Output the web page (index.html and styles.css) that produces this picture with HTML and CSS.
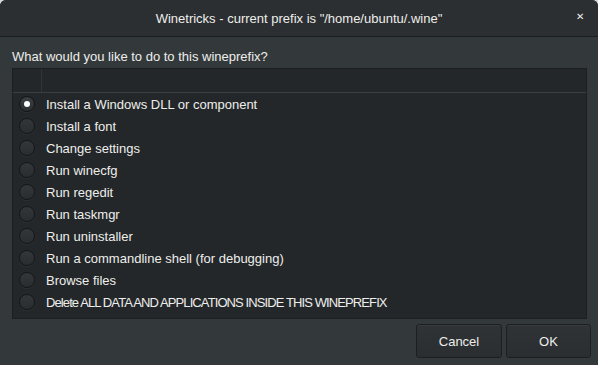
FILE: index.html
```html
<!DOCTYPE html>
<html lang="en">
<head>
    <meta charset="UTF-8">
    <title>Winetricks</title>
    <link rel="stylesheet" href="styles.css">
</head>
<body>

    <div class="window">
        <div class="titlebar">
            <span class="title">Winetricks - current prefix is "/home/ubuntu/.wine"</span>
            <span class="close">&#x2715;</span>
        </div>

        <div class="content">
            <div class="question">What would you like to do to this wineprefix?</div>

            <div class="list">
                <div class="list-header">
                    <div class="header-cell first"></div>
                    <div class="header-cell"></div>
                </div>
                <div class="row"><span class="radio checked"></span>Install a Windows DLL or component</div>
                <div class="row"><span class="radio"></span>Install a font</div>
                <div class="row"><span class="radio"></span>Change settings</div>
                <div class="row"><span class="radio"></span>Run winecfg</div>
                <div class="row"><span class="radio"></span>Run regedit</div>
                <div class="row"><span class="radio"></span>Run taskmgr</div>
                <div class="row"><span class="radio"></span>Run uninstaller</div>
                <div class="row"><span class="radio"></span>Run a commandline shell (for debugging)</div>
                <div class="row"><span class="radio"></span>Browse files</div>
                <div class="row"><span class="radio"></span><span class="caps">Delete ALL DATA AND APPLICATIONS INSIDE THIS WINEPREFIX</span></div>
            </div>

            <div class="buttons">
                <button type="button" class="btn cancel">Cancel</button>
                <button type="button" class="btn ok">OK</button>
            </div>
        </div>
    </div>

</body>
</html>
```

FILE: styles.css
```css
html {
    background-color: #d9d9d9;
}

body {
    margin: 0;
    padding: 0;
    font-family: 'Liberation Sans', Arial, sans-serif;
    font-size: 13px;
    color: #eeeeec;
}

.window {
    width: 598px;
    height: 365px;
    background-color: #33393b;
    border-radius: 6px 6px 0 0;
    overflow: hidden;
    display: flex;
    flex-direction: column;
}

.titlebar {
    height: 36px;
    flex-shrink: 0;
    background-color: #2c2f31;
    border-bottom: 1px solid #1b1d1e;
    display: flex;
    align-items: center;
    justify-content: center;
    position: relative;
}

.title {
    color: #eeeeec;
}

.close {
    position: absolute;
    right: 14px;
    top: 11px;
    font-size: 10px;
    color: #eeeeec;
}

.content {
    display: flex;
    flex-direction: column;
    padding: 0 11px 0 12px;
}

.question {
    height: 31px;
    line-height: 40px;
}

.list {
    background-color: #232729;
    border: 1px solid #1c1f21;
    height: 251px;
    box-sizing: border-box;
}

.list-header {
    display: flex;
    height: 23px;
    border-bottom: 1px solid #3a3f42;
}

.header-cell {
    flex: 1;
}

.header-cell.first {
    flex: 0 0 28px;
    border-right: 1px solid #2f3436;
}

.row {
    height: 22px;
    display: flex;
    align-items: center;
    padding-left: 6px;
}

/* caps in the original font are narrower */
.caps {
    letter-spacing: -0.9px;
}

.radio {
    width: 16px;
    height: 16px;
    box-sizing: border-box;
    border-radius: 50%;
    border: 1px solid #151718;
    background: linear-gradient(#33373a, #2a2d2f);
    box-shadow: 0 1px rgba(255, 255, 255, 0.04);
    margin-right: 11px;
    flex-shrink: 0;
    position: relative;
}

.radio.checked {
    background: linear-gradient(#3a3f42, #2c2f31);
    border-color: #121415;
}

.radio.checked::after {
    content: '';
    position: absolute;
    left: 4px;
    top: 4px;
    width: 6px;
    height: 6px;
    border-radius: 50%;
    background-color: #ffffff;
}

.buttons {
    display: flex;
    justify-content: flex-end;
    gap: 4px;
    margin-top: 5px;
    margin-right: -4px;
}

.btn {
    height: 34px;
    font-family: 'Liberation Sans', Arial, sans-serif;
    font-size: 13px;
    color: #eeeeec;
    background: linear-gradient(#2f3335, #2a2e30);
    border: 1px solid #1b1f20;
    border-radius: 3px;
    box-shadow: inset 0 1px rgba(255, 255, 255, 0.04);
}

.cancel {
    width: 86px;
}

.ok {
    width: 85px;
}
```
